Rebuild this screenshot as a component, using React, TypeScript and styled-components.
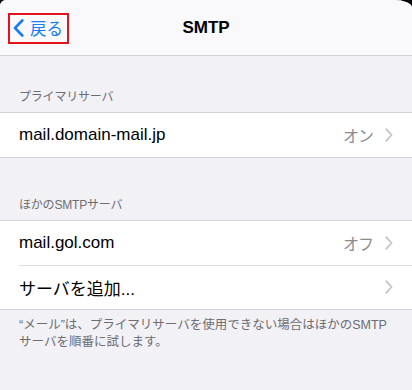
import React from "react";
import styled, { createGlobalStyle } from "styled-components";

const Global = createGlobalStyle`
  html, body { margin: 0; padding: 0; background: #000; }
  body { font-family: "Liberation Sans", "Noto Sans CJK JP", sans-serif; -webkit-font-smoothing: antialiased; }
`;

const Screen = styled.div`
  width: 412px;
  height: 390px;
  background: #f1f1f6;
  border-top-left-radius: 6px;
  border-top-right-radius: 18px 8px;
  overflow: hidden;
  display: flex;
  flex-direction: column;
`;

const NavBar = styled.div`
  height: 55px;
  flex: none;
  background: #f9f9fb;
  border-bottom: 1px solid #d3d3d8;
  display: grid;
  grid-template-columns: 1fr auto 1fr;
  align-items: center;
  padding: 0 8px;
`;

const BackButton = styled.div`
  justify-self: start;
  display: flex;
  align-items: center;
  gap: 6px;
  height: 27px;
  padding: 0 4px 0 3px;
  border: 2px solid #e3131b;
  color: #1a7df5;
  font-size: 16.5px;
  margin-top: 1px;
`;

const Title = styled.div`
  font-size: 17px;
  font-weight: bold;
  color: #000;
`;

const SectionHeader = styled.div<{ $top: number }>`
  padding: ${(p) => p.$top}px 19px 7px 19px;
  font-size: 12px;
  line-height: 16px;
  color: #6d6d72;
  letter-spacing: -0.2px;
`;

const Group = styled.div`
  background: #fff;
  border-top: 1px solid #d1d1d6;
  border-bottom: 1px solid #d1d1d6;
`;

const Row = styled.div`
  height: 44px;
  display: flex;
  align-items: center;
  padding-left: 19px;
`;

const RowInner = styled.div<{ $sep?: boolean }>`
  flex: 1;
  height: 100%;
  display: flex;
  align-items: center;
  padding-right: 19px;
  ${(p) => (p.$sep ? "border-bottom: 1px solid #e0e0e4;" : "")}
`;

const Label = styled.div`
  flex: 1;
  font-size: 17px;
  color: #000;
`;

const Value = styled.div`
  font-size: 16px;
  color: #8a8a8f;
  margin-right: 12px;
  letter-spacing: -1px;
`;

const Footer = styled.div`
  padding: 7px 19px 0 19px;
  font-size: 12.5px;
  line-height: 17px;
  color: #6d6d72;
`;

const Chevron = () => (
  <svg width="8" height="14" viewBox="0 0 8 14" fill="none">
    <path d="M1.2 1.2 L6.6 7 L1.2 12.8" stroke="#c4c4c9" strokeWidth="1.8" strokeLinecap="round" strokeLinejoin="round" />
  </svg>
);

const BackChevron = () => (
  <svg width="11" height="18" viewBox="0 0 11 18" fill="none">
    <path d="M9.3 1.5 L2 9 L9.3 16.5" stroke="#1a7df5" strokeWidth="2.6" strokeLinecap="round" strokeLinejoin="round" />
  </svg>
);

export default function App() {
  return (
    <>
      <Global />
      <Screen>
        <NavBar>
          <BackButton>
            <BackChevron />
            <span>戻る</span>
          </BackButton>
          <Title>SMTP</Title>
          <div />
        </NavBar>

        <SectionHeader $top={33}>プライマリサーバ</SectionHeader>
        <Group>
          <Row>
            <RowInner>
              <Label>mail.domain-mail.jp</Label>
              <Value>オン</Value>
              <Chevron />
            </RowInner>
          </Row>
        </Group>

        <SectionHeader $top={39}>ほかのSMTPサーバ</SectionHeader>
        <Group>
          <Row>
            <RowInner $sep>
              <Label>mail.gol.com</Label>
              <Value>オフ</Value>
              <Chevron />
            </RowInner>
          </Row>
          <Row>
            <RowInner>
              <Label>サーバを追加...</Label>
              <Chevron />
            </RowInner>
          </Row>
        </Group>

        <Footer>
          “メール”は、プライマリサーバを使用できない場合はほかのSMTP
          <br />
          サーバを順番に試します。
        </Footer>
      </Screen>
    </>
  );
}
